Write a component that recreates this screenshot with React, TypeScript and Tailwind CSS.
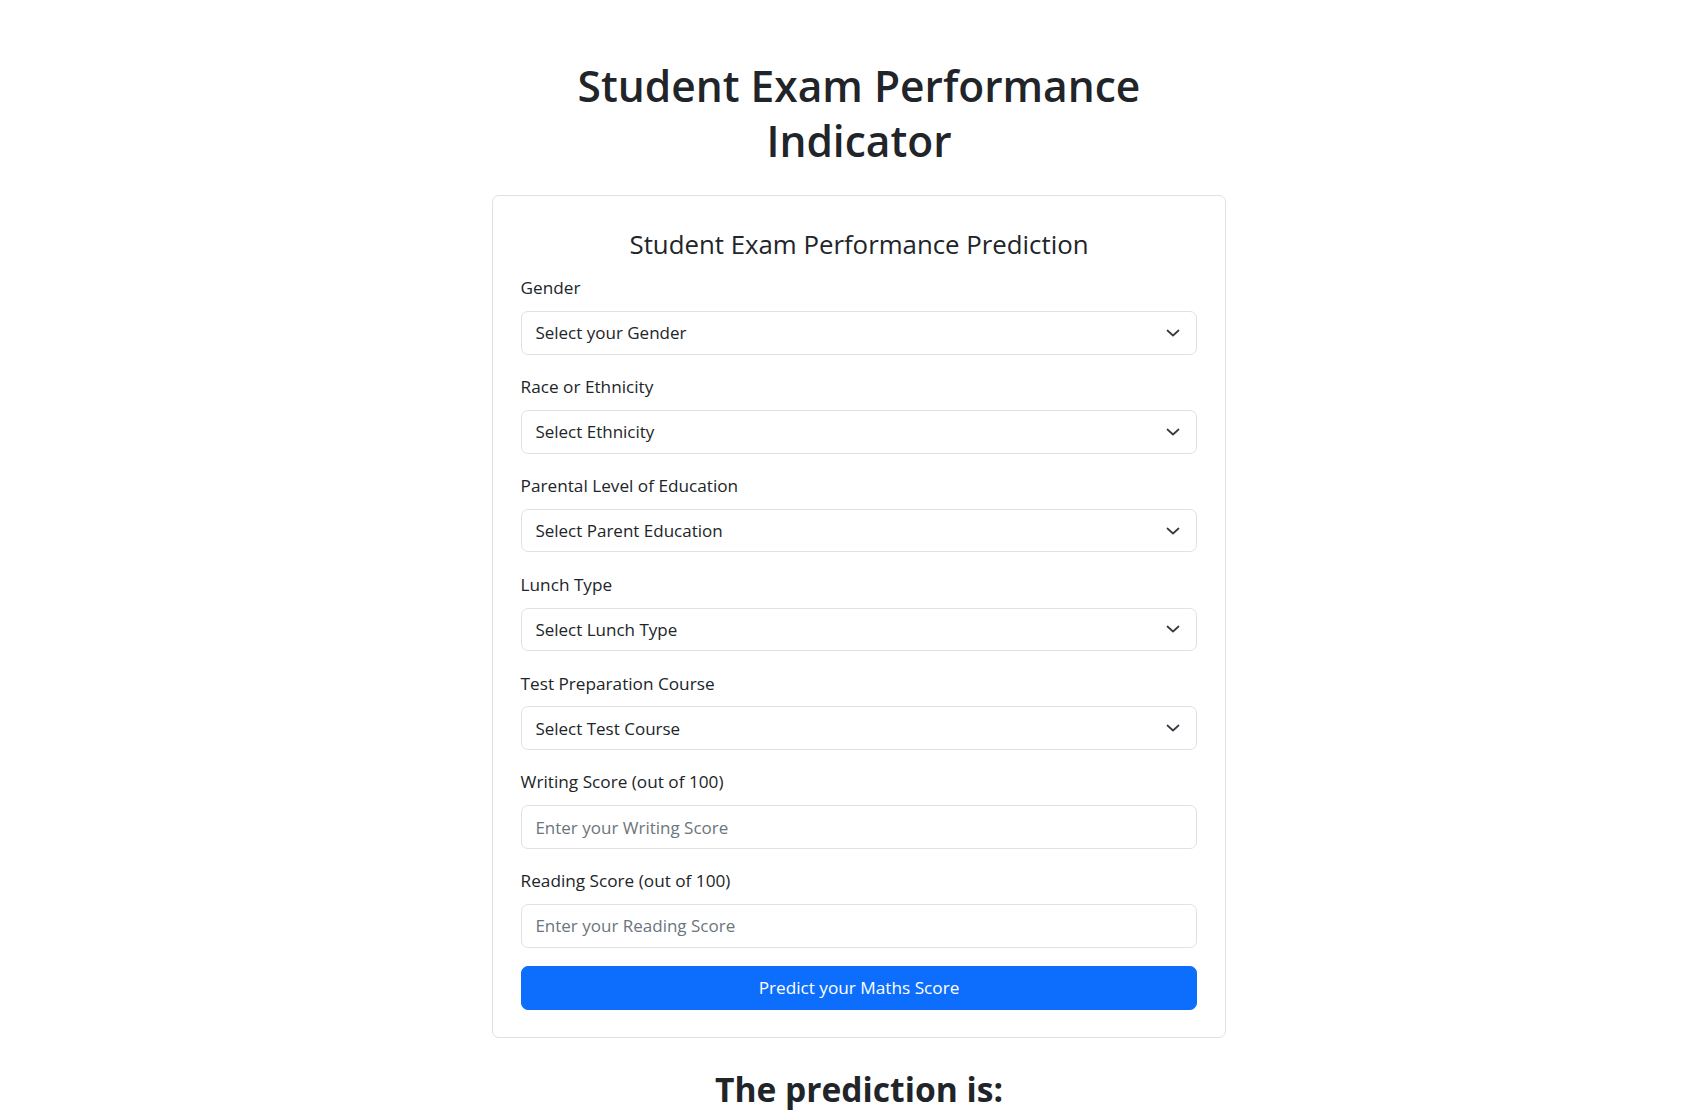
import { ChangeEvent, useState } from 'react'

interface Field {
  name: string
  label: string
  placeholder: string
  options?: string[]
}

const fields: Field[] = [
  { name: 'gender', label: 'Gender', placeholder: 'Select your Gender', options: ['male', 'female'] },
  {
    name: 'ethnicity',
    label: 'Race or Ethnicity',
    placeholder: 'Select Ethnicity',
    options: ['group A', 'group B', 'group C', 'group D', 'group E'],
  },
  {
    name: 'parental_level_of_education',
    label: 'Parental Level of Education',
    placeholder: 'Select Parent Education',
    options: [
      "associate's degree",
      "bachelor's degree",
      'high school',
      "master's degree",
      'some college',
      'some high school',
    ],
  },
  { name: 'lunch', label: 'Lunch Type', placeholder: 'Select Lunch Type', options: ['free/reduced', 'standard'] },
  {
    name: 'test_preparation_course',
    label: 'Test Preparation Course',
    placeholder: 'Select Test Course',
    options: ['none', 'completed'],
  },
  { name: 'writing_score', label: 'Writing Score (out of 100)', placeholder: 'Enter your Writing Score' },
  { name: 'reading_score', label: 'Reading Score (out of 100)', placeholder: 'Enter your Reading Score' },
]

function Chevron() {
  return (
    <svg
      className="pointer-events-none absolute right-[17px] top-1/2 h-[8px] w-[14px] -translate-y-1/2"
      viewBox="0 0 14 8"
      fill="none"
    >
      <path d="m1.5 1.5 5.5 5 5.5-5" stroke="#343a40" strokeWidth={1.7} strokeLinecap="round" strokeLinejoin="round" />
    </svg>
  )
}

export default function App() {
  const [values, setValues] = useState<Record<string, string>>({})

  const update = (e: ChangeEvent<HTMLSelectElement | HTMLInputElement>) =>
    setValues({ ...values, [e.target.name]: e.target.value })

  return (
    <div
      className="min-h-screen bg-white pl-[18px] text-[#212529]"
      style={{ fontFamily: '"Open Sans", "Noto Sans", sans-serif' }}
    >
      <div className="mx-auto w-[734px] pt-[58px]">
        <h1 className="mx-auto mb-[27px] w-[640px] text-center text-[42.5px] font-semibold leading-[55px]">
          Student Exam Performance Indicator
        </h1>

        <form
          className="rounded-[7px] border border-[#dfe1e4] p-[27.6px]"
          onSubmit={(e) => e.preventDefault()}
        >
          <legend className="mb-[9.2px] w-full text-center text-[25.8px] leading-[41.4px]">
            Student Exam Performance Prediction
          </legend>

          {fields.map((f) => (
            <div key={f.name} className="mb-[18.4px]">
              <label htmlFor={f.name} className="mb-[9.2px] block text-[17.2px] leading-[27.6px]">
                {f.label}
              </label>
              {f.options ? (
                <div className="relative">
                  <select
                    id={f.name}
                    name={f.name}
                    value={values[f.name] ?? ''}
                    onChange={update}
                    className="block h-[43.7px] w-full appearance-none rounded-[7px] border border-[#dee2e6] bg-white pl-[13.8px] pr-[41px] text-[17px] text-[#212529] outline-none"
                  >
                    <option value="" disabled>
                      {f.placeholder}
                    </option>
                    {f.options.map((o) => (
                      <option key={o} value={o}>
                        {o}
                      </option>
                    ))}
                  </select>
                  <Chevron />
                </div>
              ) : (
                <input
                  id={f.name}
                  name={f.name}
                  type="number"
                  min={0}
                  max={100}
                  placeholder={f.placeholder}
                  value={values[f.name] ?? ''}
                  onChange={update}
                  className="block h-[43.7px] w-full rounded-[7px] border border-[#dee2e6] bg-white px-[13.8px] text-[17px] text-[#212529] outline-none placeholder:text-[#6c757d]"
                />
              )}
            </div>
          ))}

          <button
            type="submit"
            className="block h-[43.7px] w-full rounded-[7px] border border-[#0d6efd] bg-[#0d6efd] text-[17.2px] text-white"
          >
            Predict your Maths Score
          </button>
        </form>

        <h2 className="mt-[29px] text-center text-[33.6px] font-bold leading-[44px]">The prediction is:</h2>
      </div>
    </div>
  )
}
